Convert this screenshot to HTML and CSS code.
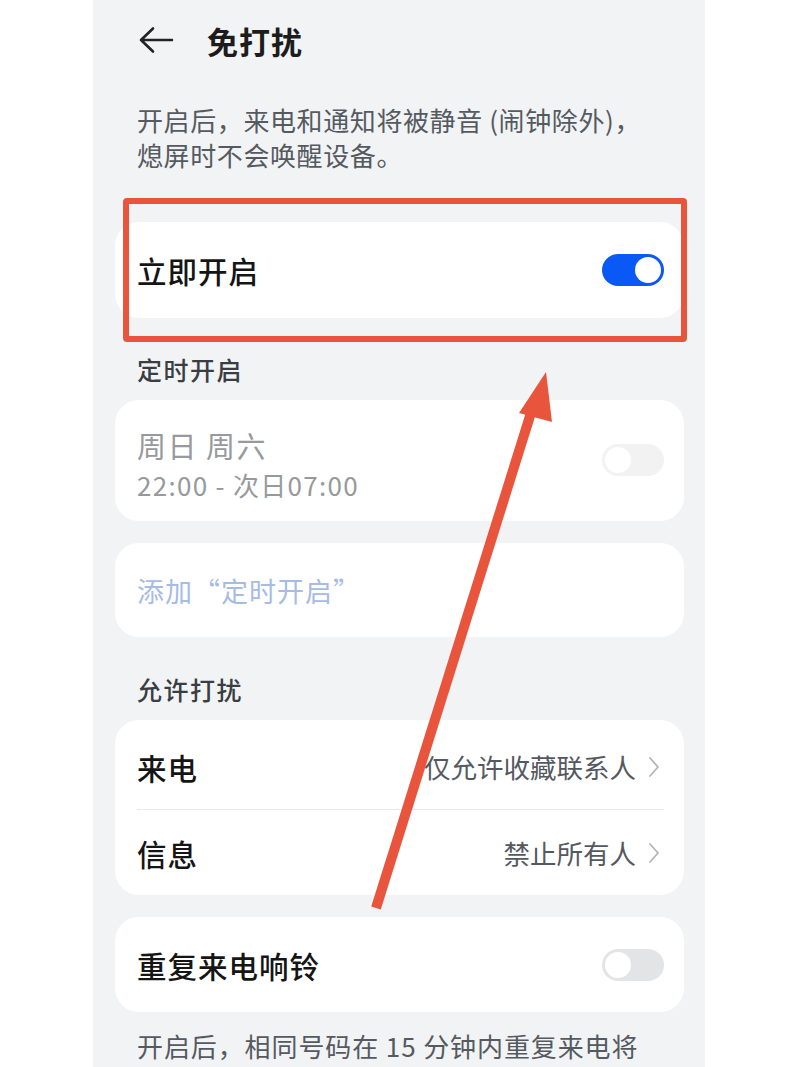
FILE: index.html
```html
<!DOCTYPE html>
<html lang="zh">
<head>
<meta charset="utf-8">
<link rel="stylesheet" href="styles.css">
</head>
<body>
<div class="phone">
  <header class="topbar">
    <svg class="back" width="36" height="28" viewBox="0 0 36 28"><path d="M3 14 H34 M15 2.5 L3 14 L15 25.5" fill="none" stroke="#222" stroke-width="2.6" stroke-linecap="round" stroke-linejoin="round"/></svg>
    <h1 class="title">免打扰</h1>
  </header>
  <p class="desc">开启后，来电和通知将被静音 (闹钟除外)，<br>熄屏时不会唤醒设备。</p>

  <div class="card row first">
    <span class="label">立即开启</span>
    <span class="switch on"></span>
  </div>

  <div class="section">定时开启</div>
  <div class="card row sched">
    <div class="stack">
      <span class="days">周日 周六</span>
      <span class="time">22:00 - 次日07:00</span>
    </div>
    <span class="switch off faded"></span>
  </div>
  <div class="card row add">
    <span class="addlink">添加“定时开启”</span>
  </div>

  <div class="section allow">允许打扰</div>
  <div class="card list">
    <div class="row item">
      <span class="label">来电</span>
      <span class="value">仅允许收藏联系人<svg class="chev" width="12" height="22" viewBox="0 0 12 22"><path d="M2 2 L10 11 L2 20" fill="none" stroke="#b5b5b5" stroke-width="1.8" stroke-linecap="round" stroke-linejoin="round"/></svg></span>
    </div>
    <div class="divider"></div>
    <div class="row item">
      <span class="label">信息</span>
      <span class="value">禁止所有人<svg class="chev" width="12" height="22" viewBox="0 0 12 22"><path d="M2 2 L10 11 L2 20" fill="none" stroke="#b5b5b5" stroke-width="1.8" stroke-linecap="round" stroke-linejoin="round"/></svg></span>
    </div>
  </div>

  <div class="card row repeat">
    <span class="label">重复来电响铃</span>
    <span class="switch off"></span>
  </div>
  <p class="note">开启后，相同号码在 15 分钟内重复来电将</p>
</div>

<div class="highlight"></div>
<svg class="arrow" width="800" height="1067" viewBox="0 0 800 1067">
  <line x1="376" y1="908" x2="535" y2="400" stroke="#e9553c" stroke-width="10" stroke-linecap="butt"/>
  <polygon points="546,372 519,413 552,422" fill="#e9553c"/>
</svg>
</body>
</html>
```

FILE: styles.css
```css
html, body {
  margin: 0;
  padding: 0;
  background: #ffffff;
}
body {
  position: relative;
  width: 800px;
  height: 1067px;
  overflow: hidden;
  font-family: "Noto Sans CJK SC", "Noto Sans", sans-serif;
}
.phone {
  width: 612px;
  margin-left: 93px;
  min-height: 1067px;
  background: #f1f3f5;
  padding: 0 21px 0 22px;
  box-sizing: border-box;
}
.topbar {
  height: 80px;
  display: flex;
  align-items: center;
  padding-left: 23px;
}
.back {
  display: block;
  margin-right: 33px;
}
.title {
  margin: 0;
  font-size: 31px;
  font-weight: 700;
  color: #1c1c1c;
  letter-spacing: 1px;
}
.desc {
  margin: 22px 0 0 22px;
  font-size: 26px;
  line-height: 35px;
  letter-spacing: 0.6px;
  color: #555a60;
  white-space: nowrap;
}
.card {
  background: #ffffff;
  border-radius: 24px;
}
.row {
  display: flex;
  align-items: center;
  justify-content: space-between;
  padding: 0 20px 0 22px;
}
.first {
  margin-top: 50px;
  height: 96px;
}
.label {
  font-size: 29.5px;
  font-weight: 500;
  letter-spacing: 1px;
  color: #151515;
}
.switch {
  position: relative;
  width: 62px;
  height: 32px;
  border-radius: 16px;
  box-sizing: border-box;
  flex: none;
}
.switch::after {
  content: "";
  position: absolute;
  top: 3px;
  width: 26px;
  height: 26px;
  border-radius: 50%;
  background: #ffffff;
}
.switch.on {
  background: #0a59f7;
}
.switch.on::after {
  right: 3px;
}
.switch.off {
  background: #e3e4e6;
}
.switch.off::after {
  left: 3px;
}
.switch.faded {
  opacity: 0.45;
}
.section {
  height: 82px;
  box-sizing: border-box;
  padding: 36px 0 0 22px;
  font-size: 25px;
  line-height: 30px;
  letter-spacing: 1.5px;
  font-weight: 500;
  color: #3a3d42;
}
.sched {
  height: 121px;
  align-items: flex-start;
}
.sched .switch {
  margin-top: 44px;
}
.stack {
  display: flex;
  flex-direction: column;
  padding-top: 25px;
}
.days {
  font-size: 29px;
  line-height: 40px;
  letter-spacing: 1.5px;
  color: #97999c;
}
.time {
  font-size: 26px;
  line-height: 40px;
  letter-spacing: 1.3px;
  color: #97999c;
}
.add {
  margin-top: 22px;
  height: 94px;
}
.addlink {
  font-size: 27px;
  letter-spacing: 1px;
  color: #a6bbe6;
}
.allow {
  height: 83px;
  padding-top: 37px;
}
.list {
  height: 175px;
  display: flex;
  flex-direction: column;
  padding-top: 4px;
  box-sizing: border-box;
}
.item {
  flex: 1;
}
.divider {
  height: 1px;
  background: #e8e9eb;
  margin: 0 20px 0 22px;
}
.value {
  display: flex;
  align-items: center;
  font-size: 26.5px;
  color: #55595f;
}
.chev {
  margin-left: 12px;
  margin-right: 4px;
}
.repeat {
  margin-top: 22px;
  height: 95px;
}
.note {
  margin: 16px 0 0 22px;
  font-size: 26px;
  line-height: 35px;
  letter-spacing: 0.9px;
  color: #555a60;
  white-space: nowrap;
}
.highlight {
  position: absolute;
  left: 123px;
  top: 198px;
  width: 564px;
  height: 144px;
  border: 6px solid #e9553c;
  border-radius: 4px;
  box-sizing: border-box;
}
.arrow {
  position: absolute;
  left: 0;
  top: 0;
  pointer-events: none;
}
```
